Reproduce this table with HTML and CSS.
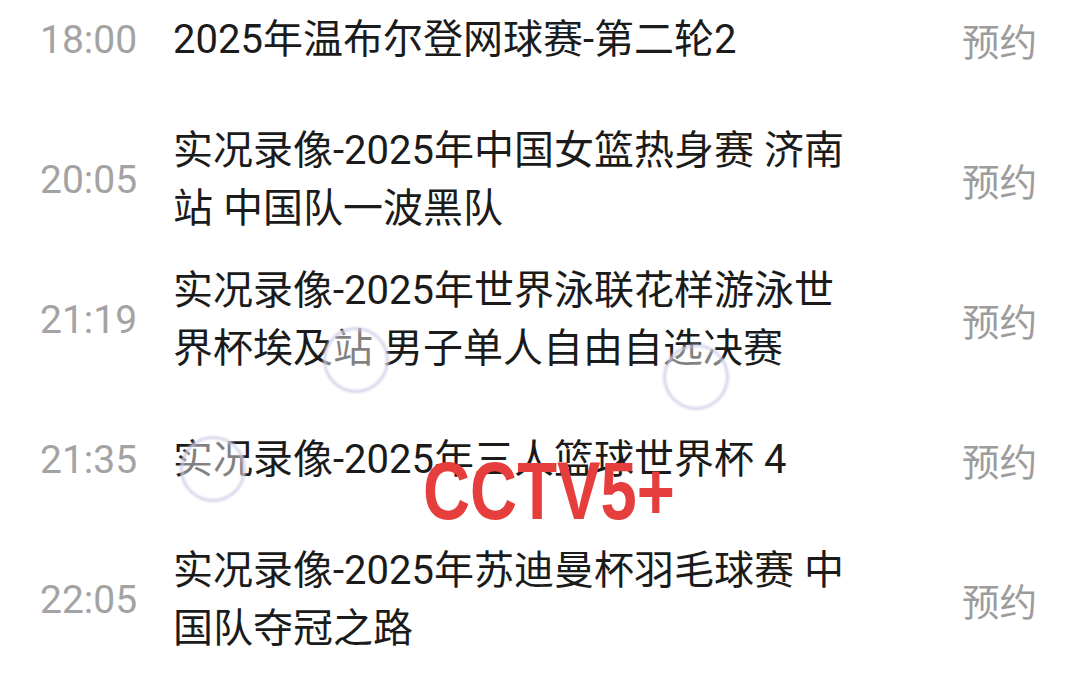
FILE: index.html
```html
<!DOCTYPE html>
<html lang="zh-CN">
<head>
<meta charset="utf-8">
<title>CCTV5+ 节目单</title>
<link rel="stylesheet" href="styles.css">
</head>
<body>
<div class="page">
  <ul class="list">
    <li class="row">
      <span class="time">18:00</span>
      <span class="title">2025年温布尔登网球赛-第二轮2</span>
      <span class="action">预约</span>
    </li>
    <li class="row">
      <span class="time">20:05</span>
      <span class="title">实况录像-2025年中国女篮热身赛 济南站 中国队一波黑队</span>
      <span class="action">预约</span>
    </li>
    <li class="row">
      <span class="time">21:19</span>
      <span class="title">实况录像-2025年世界泳联花样游泳世界杯埃及站 男子单人自由自选决赛</span>
      <span class="action">预约</span>
    </li>
    <li class="row">
      <span class="time">21:35</span>
      <span class="title">实况录像-2025年三人篮球世界杯 4</span>
      <span class="action">预约</span>
    </li>
    <li class="row">
      <span class="time">22:05</span>
      <span class="title">实况录像-2025年苏迪曼杯羽毛球赛 中国队夺冠之路</span>
      <span class="action">预约</span>
    </li>
  </ul>
  <div class="ripple ripple-a"></div>
  <div class="ripple ripple-b"></div>
  <div class="ripple ripple-c"></div>
  <div class="watermark">CCTV5+</div>
</div>
</body>
</html>
```

FILE: styles.css
```css
html, body {
  margin: 0;
  padding: 0;
  background: #ffffff;
}

.page {
  position: relative;
  width: 1080px;
  height: 678px;
  overflow: hidden;
  background: #ffffff;
  font-family: Roboto, "Noto Sans CJK SC", sans-serif;
}

.list {
  list-style: none;
  margin: -30px 0 0 0;
  padding: 0;
}

.row {
  display: grid;
  grid-template-columns: 133px 692px 1fr;
  align-items: center;
  height: 140px;
  padding: 0 43px 0 40px;
}

.time {
  font-size: 39px;
  line-height: 58px;
  color: #a3a3a3;
}

.title {
  font-size: 40px;
  line-height: 58px;
  color: #1b1b1b;
}

.action {
  justify-self: end;
  font-family: "Noto Sans CJK SC", sans-serif;
  font-size: 37.5px;
  line-height: 58px;
  color: #9c9c9c;
}

.ripple {
  position: absolute;
  width: 60px;
  height: 60px;
  border-radius: 50%;
  border: 3px solid rgba(200, 200, 228, 0.75);
  background: rgba(255, 255, 255, 0.45);
  filter: blur(0.8px);
}

.ripple-a { left: 323px; top: 327px; }
.ripple-b { left: 663px; top: 344px; }
.ripple-c { left: 180px; top: 436px; }

.watermark {
  position: absolute;
  left: 423px;
  top: 446px;
  font-family: "Liberation Sans", Arial, sans-serif;
  font-weight: bold;
  font-size: 81px;
  line-height: 90px;
  color: #e63d3d;
  transform: scaleX(0.805);
  transform-origin: left center;
  white-space: nowrap;
}
```
